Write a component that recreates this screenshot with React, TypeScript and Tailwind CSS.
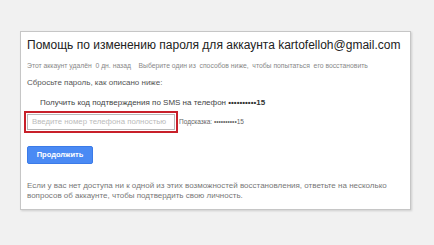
import React from "react";

const App: React.FC = () => {
  return (
    <div className="h-screen w-screen bg-[#f1f1f1] pt-[31px] pl-[20px] font-['Liberation_Sans',Arial,sans-serif]">
      <div className="w-[391px] h-[179px] bg-white border border-[#c6c6c6] shadow-[1px_1px_2px_rgba(0,0,0,0.15)] pl-[6px] pt-[6px]">
        <h1 className="text-[12px] leading-[15px] text-[#222] whitespace-nowrap">
          Помощь по изменению пароля для аккаунта kartofelloh@gmail.com
        </h1>
        <p className="mt-[8px] text-[6.8px] leading-[9px] text-[#888] whitespace-nowrap">
          Этот аккаунт удалён&nbsp; 0 дн. назад&nbsp;&nbsp;&nbsp; Выберите один из&nbsp; способов ниже,&nbsp; чтобы попытаться&nbsp; его восстановить
        </p>
        <p className="mt-[8px] text-[8px] leading-[10px] text-[#555]">
          Сбросьте пароль, как описано ниже:
        </p>
        <p className="mt-[10px] pl-[13px] text-[8px] leading-[10px] text-[#444] whitespace-nowrap">
          Получить код подтверждения по SMS на телефон{" "}
          <span className="font-bold text-[#333]">••••••••••15</span>
        </p>
        <div className="mt-[3px] flex items-center">
          <div className="ml-[-3px] border-2 border-[#c8202a] p-[1px]">
            <div className="w-[148px] h-[16px] border border-[#b9b9b9] flex items-center pl-[4px] text-[7.8px] text-[#bbb] whitespace-nowrap">
              Введите номер телефона полностью
            </div>
          </div>
          <span className="ml-[1px] text-[6.5px] text-[#666] whitespace-nowrap">Подсказка: ••••••••••15</span>
        </div>
        <button className="mt-[13px] w-[66px] h-[18px] rounded-[2px] bg-[#4a8af4] border border-[#3b7be8] text-white text-[7.5px] font-bold">
          Продолжить
        </button>
        <p className="mt-[17px] text-[8px] leading-[10px] text-[#777] whitespace-nowrap">
          Если у вас нет доступа ни к одной из этих возможностей восстановления, ответьте на несколько
          <br />
          вопросов об аккаунте, чтобы подтвердить свою личность.
        </p>
      </div>
    </div>
  );
};

export default App;
